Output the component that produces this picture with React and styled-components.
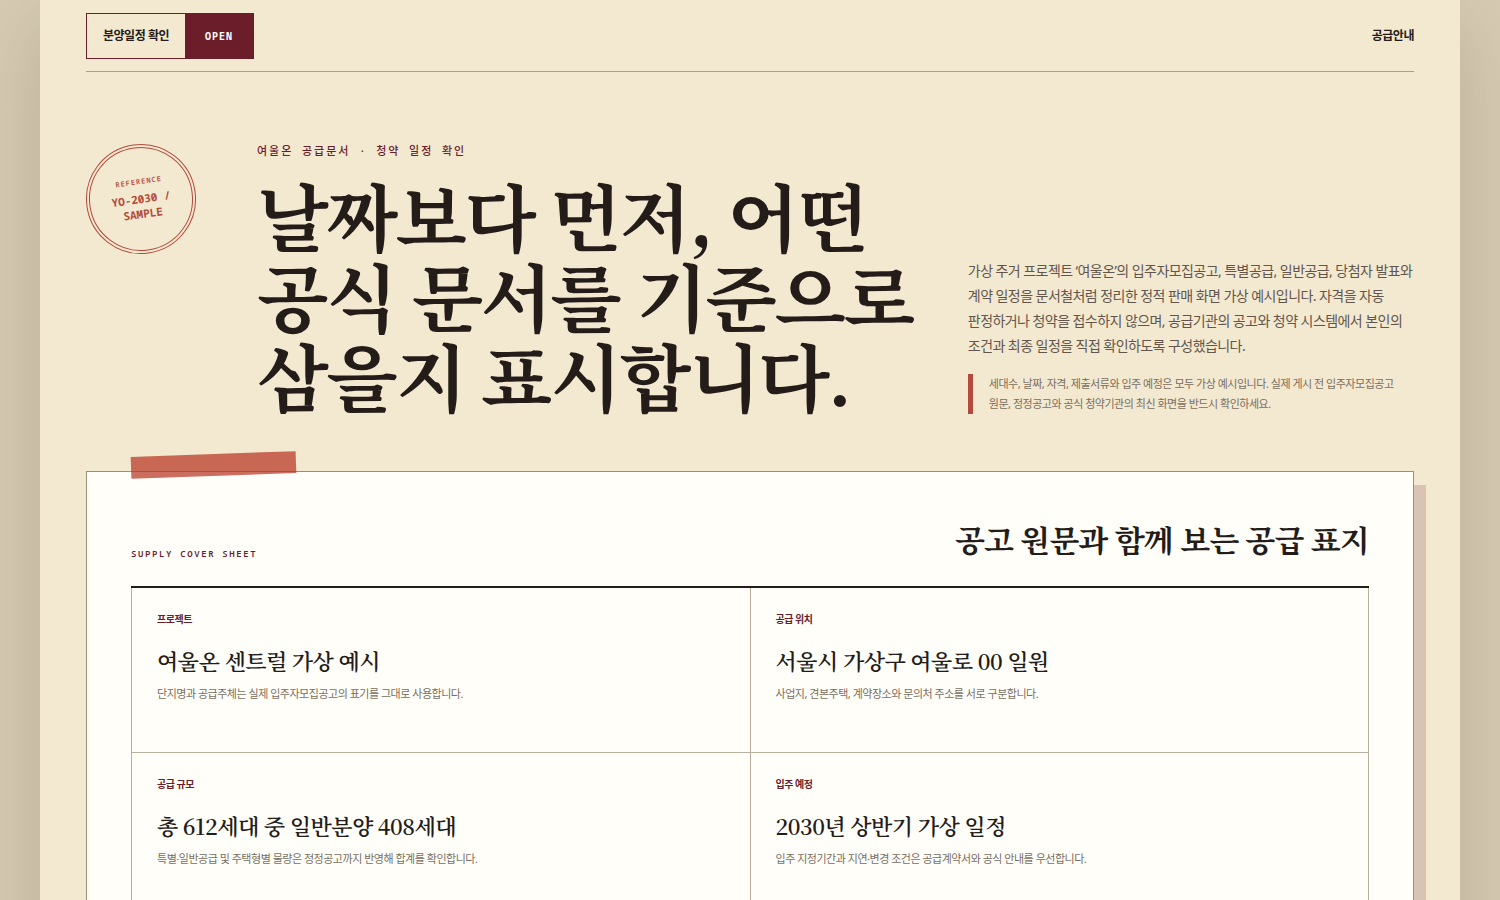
import React from 'react'
import styled, { createGlobalStyle } from 'styled-components'

const sans = "'Noto Sans', 'Noto Sans CJK KR', sans-serif"
const serif = "'Noto Serif KR', 'Noto Serif CJK KR', serif"
const mono = "'Noto Sans Mono', 'DejaVu Sans Mono', 'Noto Sans CJK KR', monospace"

const GlobalStyle = createGlobalStyle`
  * {
    box-sizing: border-box;
  }
  body {
    margin: 0;
    background: #d8ccb4;
    color: #241c19;
    font-family: ${sans};
    letter-spacing: -0.03em;
    word-break: keep-all;
  }
  h1, h2, h3, p, dl, dd {
    margin: 0;
  }
`

const Paper = styled.div`
  max-width: 1420px;
  min-height: 100vh;
  margin: 0 auto;
  padding: 0 46px 80px;
  background: #f3e8d0;
  box-shadow: 0 20px 80px rgba(62, 43, 28, 0.2);
`

const Header = styled.header`
  display: flex;
  align-items: center;
  justify-content: space-between;
  height: 72px;
  border-bottom: 1px solid #aa9f87;
`

const ScheduleButton = styled.button`
  display: flex;
  align-items: stretch;
  height: 46px;
  padding: 0;
  border: 1px solid #6b1d2a;
  background: transparent;
  color: #241c19;
  font: 700 12px/18px ${sans};
  letter-spacing: inherit;
  cursor: pointer;
`

const ScheduleText = styled.span`
  display: flex;
  align-items: center;
  padding: 0 16px;
`

const ScheduleState = styled.span`
  display: flex;
  align-items: center;
  padding: 0 20px;
  background: #6b1d2a;
  color: #fffefa;
  font-family: ${mono};
  font-size: 10px;
  letter-spacing: 1px;
`

const NavLink = styled.a`
  color: #241c19;
  font-size: 12px;
  font-weight: 700;
  line-height: 18px;
  text-decoration: none;
`

const Hero = styled.section`
  display: grid;
  grid-template-columns: 125px minmax(0, 149fr) minmax(0, 100fr);
  column-gap: 46px;
  padding: 72px 0 56px;
`

const Stamp = styled.div`
  display: flex;
  flex-direction: column;
  align-items: center;
  justify-content: center;
  gap: 4px;
  width: 110px;
  height: 110px;
  border: 4px double #b54a3c;
  border-radius: 50%;
  color: #b54a3c;
  font-family: ${mono};
  text-align: center;
  transform: rotate(-8deg);
`

const StampLabel = styled.span`
  font-size: 7px;
  font-weight: 600;
  line-height: 10px;
  letter-spacing: 1px;
`

const StampCode = styled.strong`
  width: 72px;
  font-size: 11px;
  line-height: 15px;
  letter-spacing: 0;
`

const Eyebrow = styled.p`
  color: #6b1d2a;
  font-family: ${mono};
  font-size: 11px;
  font-weight: 500;
  line-height: 14px;
  letter-spacing: 2px;
`

const Title = styled.h1`
  margin-top: 16px;
  font-family: ${serif};
  font-size: 74px;
  font-weight: 700;
  line-height: 80px;
  letter-spacing: -0.03em;
`

const Intro = styled.div`
  align-self: end;
`

const Lead = styled.p`
  color: #62564c;
  font-size: 14px;
  line-height: 25px;
  letter-spacing: -0.04em;
`

const Notice = styled.p`
  margin-top: 16px;
  padding-left: 16px;
  border-left: 5px solid #b54a3c;
  color: #7a6e61;
  font-size: 11px;
  line-height: 20px;
`

const Sheet = styled.section`
  position: relative;
  margin-top: 1px;
  padding: 44px;
  border: 1px solid #999079;
  background: #fffef9;
  box-shadow: 12px 14px 0 rgba(107, 29, 42, 0.18);

  &::before {
    content: '';
    position: absolute;
    top: -18px;
    left: 44px;
    width: 165px;
    height: 22px;
    background: rgba(181, 48, 32, 0.7);
    transform: rotate(-2deg);
  }
`

const SheetHeader = styled.div`
  display: flex;
  align-items: flex-end;
  justify-content: space-between;
  padding-bottom: 24px;
  border-bottom: 2px solid #241c19;
`

const SheetLabel = styled.span`
  color: #6b1d2a;
  font-family: ${mono};
  font-size: 9px;
  font-weight: 600;
  line-height: 16px;
  letter-spacing: 0.18em;
`

const SheetTitle = styled.h2`
  font-family: ${serif};
  font-size: 31px;
  font-weight: 700;
  line-height: 46px;
  letter-spacing: -0.025em;
`

const Facts = styled.dl`
  display: grid;
  grid-template-columns: repeat(2, minmax(0, 1fr));
  border-left: 1px solid #b8b09d;
`

const Fact = styled.div`
  min-height: 165px;
  padding: 24px 25px;
  border-right: 1px solid #b8b09d;
  border-bottom: 1px solid #b8b09d;
`

const FactName = styled.dt`
  color: #6b1d2a;
  font-size: 10px;
  font-weight: 700;
  line-height: 15px;
`

const FactValue = styled.dd`
  margin-top: 19px;
  font-family: ${serif};
  font-size: 22px;
  font-weight: 600;
  line-height: 30px;
`

const FactNote = styled.dd`
  margin-top: 9px;
  color: #7a6e61;
  font-size: 11px;
  line-height: 18px;
`

const facts = [
  {
    name: '프로젝트',
    value: '여울온 센트럴 가상 예시',
    note: '단지명과 공급주체는 실제 입주자모집공고의 표기를 그대로 사용합니다.'
  },
  {
    name: '공급 위치',
    value: '서울시 가상구 여울로 00 일원',
    note: '사업지, 견본주택, 계약장소와 문의처 주소를 서로 구분합니다.'
  },
  {
    name: '공급 규모',
    value: '총 612세대 중 일반분양 408세대',
    note: '특별·일반공급 및 주택형별 물량은 정정공고까지 반영해 합계를 확인합니다.'
  },
  {
    name: '입주 예정',
    value: '2030년 상반기 가상 일정',
    note: '입주 지정기간과 지연·변경 조건은 공급계약서와 공식 안내를 우선합니다.'
  }
]

function App() {
  return (
    <>
      <GlobalStyle />
      <Paper>
        <Header>
          <ScheduleButton type="button">
            <ScheduleText>분양일정 확인</ScheduleText>
            <ScheduleState>OPEN</ScheduleState>
          </ScheduleButton>
          <NavLink href="#supply">공급안내</NavLink>
        </Header>
        <Hero>
          <Stamp>
            <StampLabel>REFERENCE</StampLabel>
            <StampCode>YO-2030 / SAMPLE</StampCode>
          </Stamp>
          <div>
            <Eyebrow>여울온 공급문서 · 청약 일정 확인</Eyebrow>
            <Title>날짜보다 먼저, 어떤 공식 문서를 기준으로 삼을지 표시합니다.</Title>
          </div>
          <Intro>
            <Lead>
              가상 주거 프로젝트 ‘여울온’의 입주자모집공고, 특별공급, 일반공급, 당첨자 발표와 계약 일정을 문서철처럼 정리한
              정적 판매 화면 가상 예시입니다. 자격을 자동 판정하거나 청약을 접수하지 않으며, 공급기관의 공고와 청약
              시스템에서 본인의 조건과 최종 일정을 직접 확인하도록 구성했습니다.
            </Lead>
            <Notice>
              세대수, 날짜, 자격, 제출서류와 입주 예정은 모두 가상 예시입니다. 실제 게시 전 입주자모집공고 원문, 정정공고와
              공식 청약기관의 최신 화면을 반드시 확인하세요.
            </Notice>
          </Intro>
        </Hero>
        <Sheet id="supply">
          <SheetHeader>
            <SheetLabel>SUPPLY COVER SHEET</SheetLabel>
            <SheetTitle>공고 원문과 함께 보는 공급 표지</SheetTitle>
          </SheetHeader>
          <Facts>
            {facts.map(fact => (
              <Fact key={fact.name}>
                <FactName>{fact.name}</FactName>
                <FactValue>{fact.value}</FactValue>
                <FactNote>{fact.note}</FactNote>
              </Fact>
            ))}
          </Facts>
        </Sheet>
      </Paper>
    </>
  )
}

export default App
